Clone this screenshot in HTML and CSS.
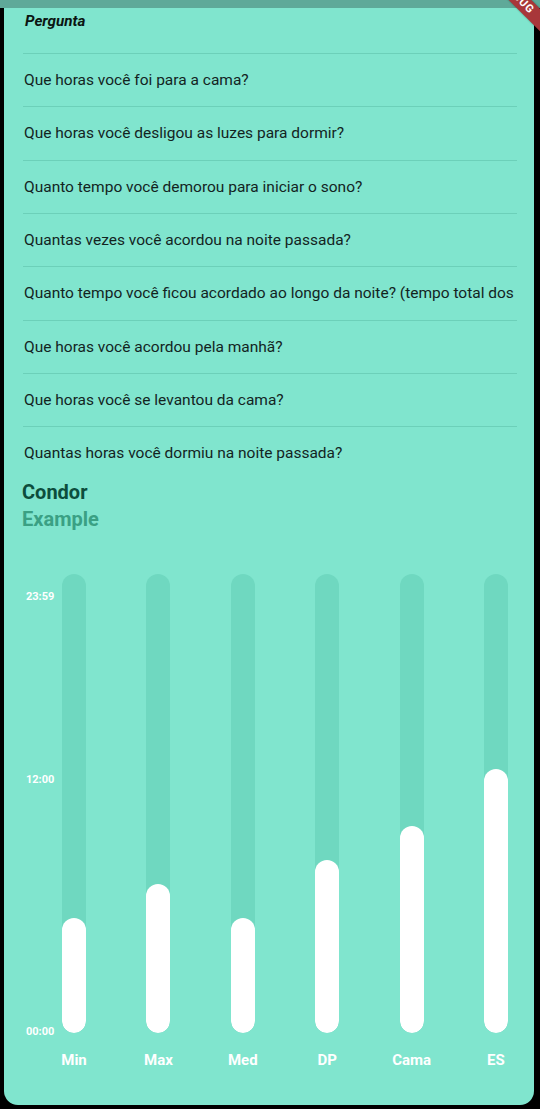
FILE: index.html
```html
<!DOCTYPE html>
<html lang="pt">
<head>
<meta charset="utf-8">
<title>Condor</title>
<link rel="stylesheet" href="styles.css">
</head>
<body>
<div class="topbar"></div>
<main class="card">
  <section class="table">
    <div class="head">Pergunta</div>
    <div class="row">Que horas você foi para a cama?</div>
    <div class="row">Que horas você desligou as luzes para dormir?</div>
    <div class="row">Quanto tempo você demorou para iniciar o sono?</div>
    <div class="row">Quantas vezes você acordou na noite passada?</div>
    <div class="row">Quanto tempo você ficou acordado ao longo da noite? (tempo total dos despertares)</div>
    <div class="row">Que horas você acordou pela manhã?</div>
    <div class="row">Que horas você se levantou da cama?</div>
    <div class="row">Quantas horas você dormiu na noite passada?</div>
  </section>
  <h1 class="title">Condor</h1>
  <h2 class="subtitle">Example</h2>
  <section class="chart">
    <div class="yaxis">
      <span class="tick tick-top">23:59</span>
      <span class="tick tick-mid">12:00</span>
      <span class="tick tick-bot">00:00</span>
    </div>
    <div class="bars">
      <div class="col"><div class="track"><div class="fill" style="height:115px"></div></div><span class="xlabel">Min</span></div>
      <div class="col"><div class="track"><div class="fill" style="height:149px"></div></div><span class="xlabel">Max</span></div>
      <div class="col"><div class="track"><div class="fill" style="height:115px"></div></div><span class="xlabel">Med</span></div>
      <div class="col"><div class="track"><div class="fill" style="height:173px"></div></div><span class="xlabel">DP</span></div>
      <div class="col"><div class="track"><div class="fill" style="height:207px"></div></div><span class="xlabel">Cama</span></div>
      <div class="col"><div class="track"><div class="fill" style="height:264px"></div></div><span class="xlabel">ES</span></div>
    </div>
  </section>
</main>
<div class="debug">DEBUG</div>
</body>
</html>
```
FILE: styles.css
```css
* { box-sizing: border-box; }
html, body {
  margin: 0;
  padding: 0;
}
body {
  width: 540px;
  height: 1109px;
  background: #000;
  overflow: hidden;
  position: relative;
  font-family: Roboto, "Noto Sans", "Liberation Sans", sans-serif;
}
.topbar {
  height: 8px;
  background: #5fa999;
}
.card {
  margin: 0 6px 0 4px;
  height: 1097px;
  background: #80e5ce;
  border-radius: 0 0 14px 14px;
  overflow: hidden;
}
.table {
  margin: 0 17px 0 19px;
}
.head {
  height: 45px;
  padding: 4px 0 0 2px;
  line-height: 18px;
  font-size: 15.2px;
  font-weight: 700;
  font-style: italic;
  color: #0b1512;
}
.row {
  height: 53.33px;
  border-top: 1px solid #6cd0b9;
  display: flex;
  align-items: center;
  padding-left: 1px;
  font-size: 15.5px;
  color: #13241f;
  white-space: nowrap;
  overflow: hidden;
}
.title {
  margin: 0;
  padding-left: 18px;
  font-size: 20px;
  line-height: 24px;
  font-weight: 700;
  color: #0c4d3d;
}
.subtitle {
  margin: 3px 0 0;
  padding-left: 18px;
  font-size: 20px;
  line-height: 24px;
  font-weight: 700;
  color: #3aa084;
}
.chart {
  display: flex;
  margin-top: 43px;
  padding: 0 26px 0 22px;
}
.yaxis {
  position: relative;
  width: 36px;
  height: 459px;
  flex: none;
}
.tick {
  position: absolute;
  left: 0;
  font-size: 11px;
  line-height: 14px;
  font-weight: 700;
  color: #fff;
}
.tick-top { top: 16px; }
.tick-mid { top: 199px; }
.tick-bot { top: 451px; }
.bars {
  flex: 1;
  display: flex;
  justify-content: space-between;
}
.col {
  width: 24px;
  display: flex;
  flex-direction: column;
  align-items: center;
}
.track {
  width: 24px;
  height: 459px;
  border-radius: 12px;
  background: #6fd8c0;
  display: flex;
  align-items: flex-end;
  overflow: hidden;
}
.fill {
  width: 100%;
  border-radius: 12px;
  background: #fff;
}
.xlabel {
  margin-top: 18px;
  line-height: 18px;
  font-size: 15px;
  font-weight: 700;
  color: #fff;
  white-space: nowrap;
}
.debug {
  position: absolute;
  left: 453px;
  top: -15px;
  width: 120px;
  height: 16px;
  padding-left: 14px;
  line-height: 16px;
  transform: rotate(45deg);
  background: #a8373a;
  color: #fff;
  font-size: 11px;
  font-weight: 700;
  text-align: center;
  letter-spacing: 1px;
  box-shadow: 0 0 2px rgba(0,0,0,0.4);
}
```
